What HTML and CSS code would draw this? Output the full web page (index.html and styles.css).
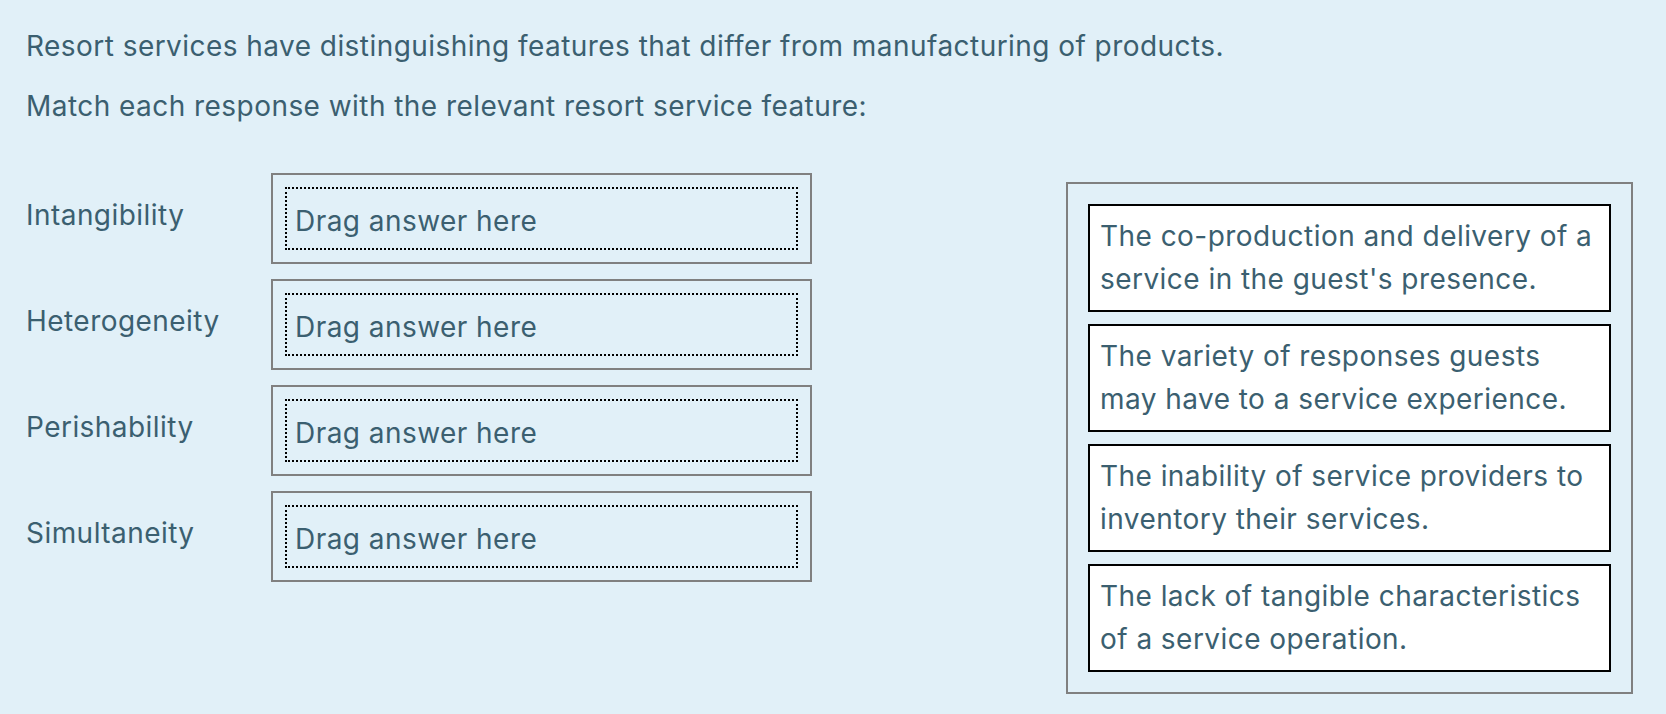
FILE: index.html
```html
<!DOCTYPE html>
<html lang="en">
<head>
<meta charset="utf-8">
<title>Resort service features</title>
<link rel="stylesheet" href="styles.css">
</head>
<body>
<div class="page">
  <p class="intro">Resort services have distinguishing features that differ from manufacturing of products.</p>
  <p class="intro">Match each response with the relevant resort service feature:</p>
  <div class="match">
    <div class="targets">
      <div class="label">Intangibility</div>
      <div class="drop"><div class="slot">Drag answer here</div></div>
      <div class="label">Heterogeneity</div>
      <div class="drop"><div class="slot">Drag answer here</div></div>
      <div class="label">Perishability</div>
      <div class="drop"><div class="slot">Drag answer here</div></div>
      <div class="label">Simultaneity</div>
      <div class="drop"><div class="slot">Drag answer here</div></div>
    </div>
    <div class="bank">
      <div class="card">The co-production and delivery of a service in the guest's presence.</div>
      <div class="card">The variety of responses guests may have to a service experience.</div>
      <div class="card">The inability of service providers to inventory their services.</div>
      <div class="card">The lack of tangible characteristics of a service operation.</div>
    </div>
  </div>
</div>
</body>
</html>
```
FILE: styles.css
```css
html, body {
  margin: 0;
  padding: 0;
  background: #e1f0f8;
}
body {
  font-family: Inter, "Noto Sans", "Liberation Sans", sans-serif;
  font-size: 28px;
  letter-spacing: 0.45px;
  line-height: 43px;
  color: #3b5f70;
}
.page {
  padding: 25px 33px 0 26px;
}
.intro {
  margin: 0 0 17px 0;
}
.match {
  display: flex;
  justify-content: space-between;
  align-items: flex-start;
  margin-top: 45px;
}
.targets {
  display: grid;
  grid-template-columns: 245px 541px;
  row-gap: 15px;
  align-items: center;
}
.label {
  padding-bottom: 6px;
}
.drop {
  border: 2px solid #808080;
  padding: 12px;
}
.slot {
  border: 2px dotted #000;
  padding: 11px 8px 5px 8px;
  line-height: 43px;
}
.bank {
  width: 567px;
  box-sizing: border-box;
  margin-top: 9px;
  border: 2px solid #808080;
  padding: 20px;
  display: flex;
  flex-direction: column;
  gap: 12px;
}
.card {
  background: #fff;
  border: 2px solid #000;
  padding: 9px 10px 9px 10px;
}
```
